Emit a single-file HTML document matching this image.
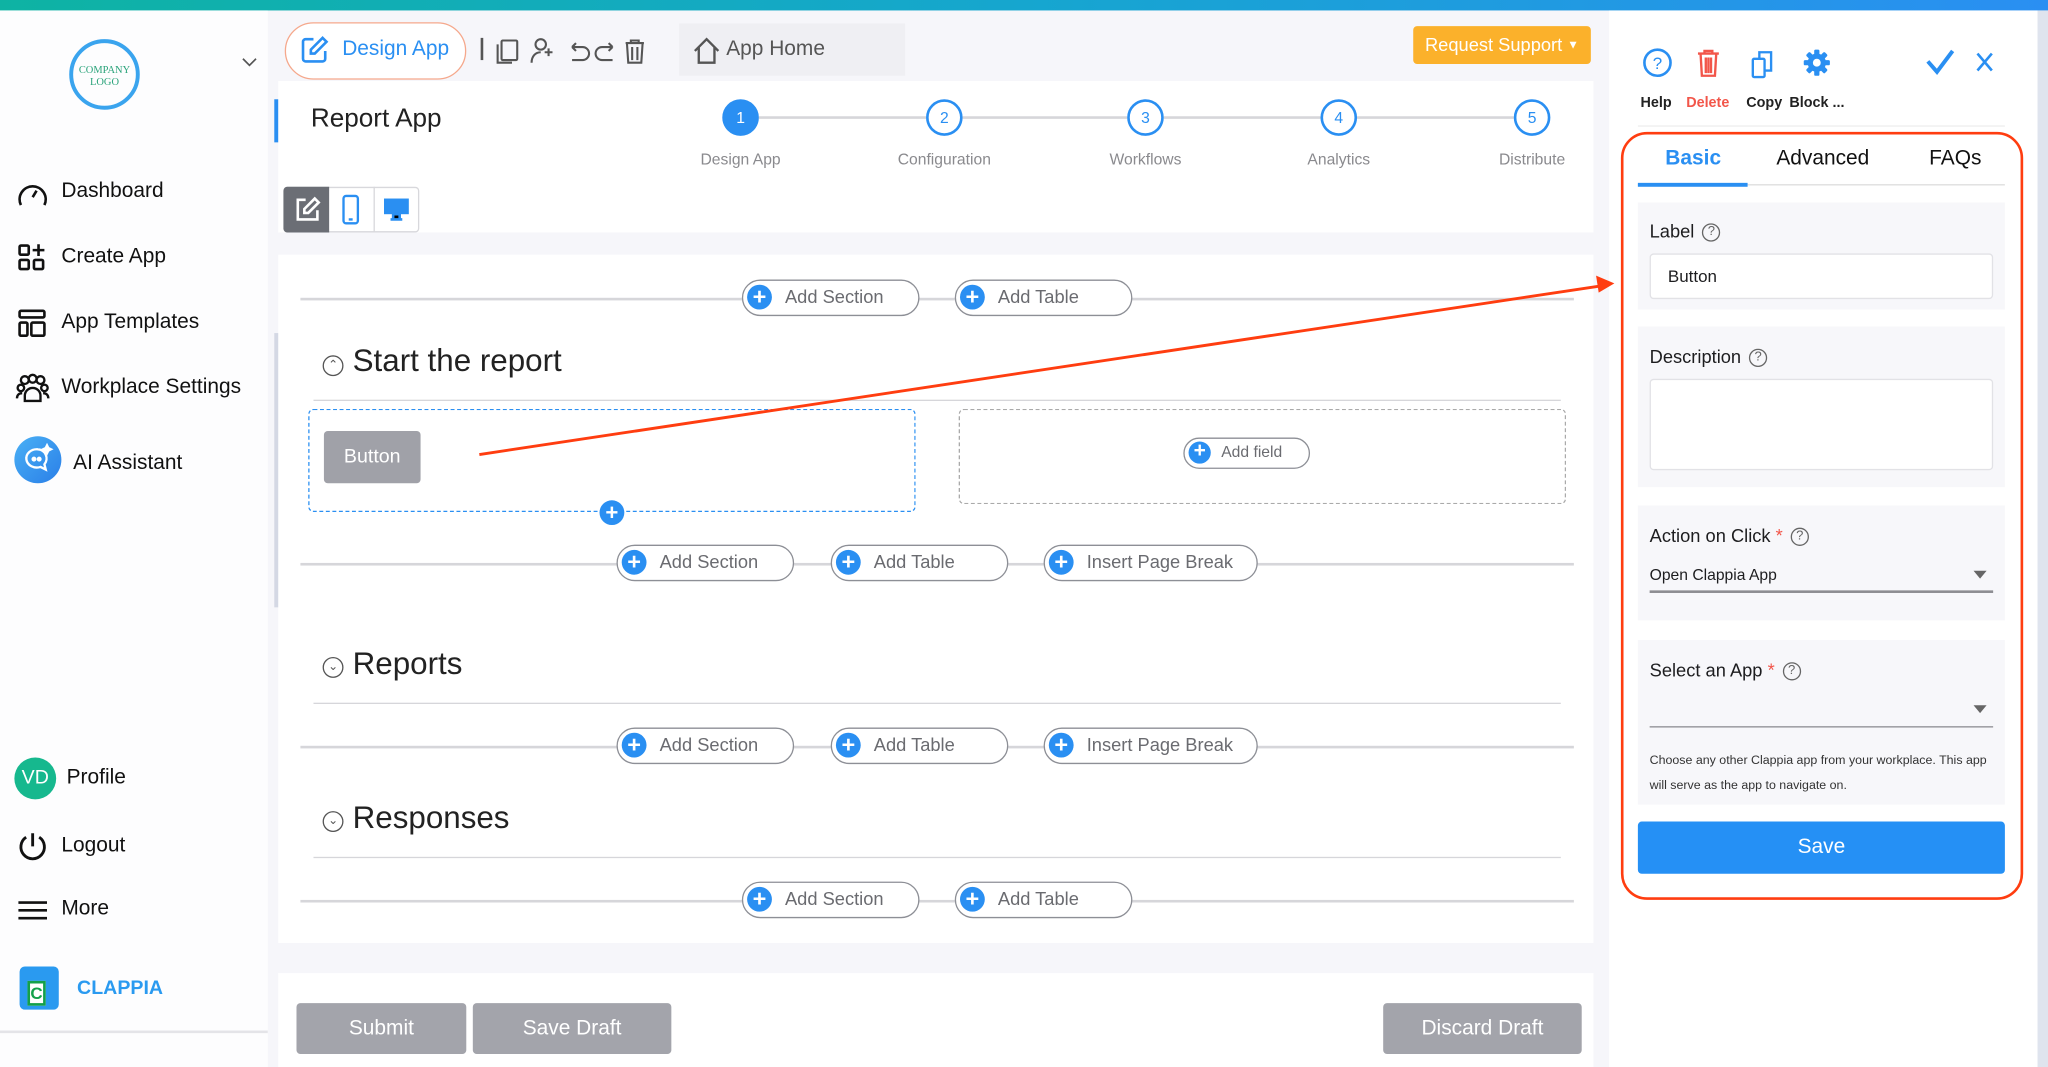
<!DOCTYPE html>
<html><head><meta charset="utf-8"><style>
*{box-sizing:border-box;margin:0;padding:0}
body{width:2048px;height:1067px;overflow:hidden;background:#f6f6fa;font-family:"Liberation Sans",sans-serif;color:#1d1d1f}
#s{position:absolute;left:0;top:0;width:1568px;height:817px;transform:scale(1.30612);transform-origin:0 0;background:#f6f6fa;overflow:hidden}
.a{position:absolute}
.pill{position:absolute;height:28px;border:1.5px solid #8d8f96;border-radius:14px;background:#fff;font-size:14px;color:#6a6b70;line-height:25px;padding-left:32px}
.pill:before{content:"";position:absolute;left:3px;top:3px;width:19px;height:19px;border-radius:50%;background:#2a8ff2}
.pill:after{content:"+";position:absolute;left:3px;top:2px;width:19px;text-align:center;color:#fff;font-weight:bold;font-size:18px;line-height:20px}
.pill.sm:before{top:2px;width:17px;height:17px}
.pill.sm:after{top:1px;width:17px;font-size:16px;line-height:18px}
.hl{position:absolute;height:1.5px;background:#d6d6da}
.nav{position:absolute;left:47px;font-size:16px;color:#111}
.step{position:absolute;width:28px;height:28px;border-radius:50%;border:2px solid #2a8ff2;color:#2a8ff2;font-size:12px;text-align:center;line-height:24px;background:#fff}
.sl{position:absolute;font-size:12px;color:#8a8a8e;width:120px;text-align:center}
.card{position:absolute;left:1254px;width:281px;background:#f7f7fa}
.q{display:inline-block;width:14px;height:14px;border:1.3px solid #666;border-radius:50%;font-size:10px;text-align:center;line-height:12px;color:#666;vertical-align:middle;margin-left:6px}
.fb{position:absolute;background:#a3a4ab;color:#fff;font-size:16px;text-align:center;line-height:39px;border-radius:3px;height:39px;top:768px}
h2{position:absolute;font-weight:normal;font-size:24px;color:#222}
.chev{position:absolute;width:16px;height:16px;border:1.3px solid #555;border-radius:50%;font-size:9px;text-align:center;line-height:13px;color:#555}
</style></head><body><div id="s">
<div class="a" style="left:0;top:0;width:1568px;height:8px;background:linear-gradient(90deg,#0eb3a3,#16a6cf 50%,#2a8ff2)"></div>
<!-- sidebar -->
<div class="a" style="left:0;top:8px;width:205px;height:809px;background:#fdfdfe"></div>
<div class="a" style="left:0;top:789px;width:205px;height:1.5px;background:#e4e4e8"></div>
<div class="a" style="left:53px;top:30px;width:54px;height:54px;border-radius:50%;border:3px solid #3aa4ee;font-family:'Liberation Serif',serif;font-size:8px;color:#2aa37a;text-align:center;line-height:9px;padding-top:16px">COMPANY<br>LOGO</div>
<svg class="a" style="left:185px;top:44px" width="12" height="8" fill="none" stroke="#555" stroke-width="1.3"><path d="M1 1l5 5 5-5"/></svg>
<svg class="a" style="left:12px;top:136px" width="26" height="24" viewBox="0 0 26 24" fill="none" stroke="#111" stroke-width="2"><path d="M4 21A10 10 0 1 1 22 21"/><path d="M13 15l3-5"/></svg>
<div class="nav" style="top:138px">Dashboard</div>
<svg class="a" style="left:13px;top:186px" width="24" height="24" fill="none" stroke="#111" stroke-width="2"><rect x="2" y="2" width="7" height="7" rx="1"/><rect x="2" y="13" width="7" height="7" rx="1"/><rect x="13" y="13" width="7" height="7" rx="1"/><path d="M16.5 1v9M12 5.5h9"/></svg>
<div class="nav" style="top:188px">Create App</div>
<svg class="a" style="left:13px;top:236px" width="24" height="24" fill="none" stroke="#111" stroke-width="2"><rect x="2" y="2" width="19" height="5" rx="1"/><rect x="2" y="11" width="6" height="10" rx="1"/><rect x="11" y="11" width="10" height="10" rx="1"/></svg>
<div class="nav" style="top:238px">App Templates</div>
<svg class="a" style="left:11px;top:286px" width="28" height="24" fill="none" stroke="#111" stroke-width="1.8"><circle cx="8" cy="5" r="3"/><circle cx="14" cy="4" r="3"/><circle cx="20" cy="5" r="3"/><circle cx="5" cy="11" r="2.5"/><circle cx="23" cy="11" r="2.5"/><path d="M8 21v-4a6 6 0 0 1 12 0v4zM2 19c0-3 2-4 4-4M26 19c0-3-2-4-4-4"/></svg>
<div class="nav" style="top:288px">Workplace Settings</div>
<div class="a" style="left:11px;top:334px;width:36px;height:36px;border-radius:50%;background:linear-gradient(135deg,#4ab0f5,#2a7fe8)"></div>
<svg class="a" style="left:16px;top:339px" width="26" height="26" fill="none" stroke="#fff" stroke-width="1.8"><path d="M13 5a8 7 0 1 0 2 13.5l4 2-1-4A7 7 0 0 0 13 5z"/><circle cx="10" cy="12.5" r="1" fill="#fff"/><circle cx="14" cy="12.5" r="1" fill="#fff"/><path d="M20 2l1 2 2 1-2 1-1 2-1-2-2-1 2-1z" fill="#fff"/></svg>
<div class="nav" style="left:56px;top:346px">AI Assistant</div>
<div class="a" style="left:11px;top:580px;width:32px;height:32px;border-radius:50%;background:#16b88e;color:#fff;font-size:15px;text-align:center;line-height:32px">VD</div>
<div class="nav" style="left:51px;top:587px">Profile</div>
<svg class="a" style="left:13px;top:636px" width="24" height="24" fill="none" stroke="#111" stroke-width="2.2"><path d="M12 2v10M7 5a9 9 0 1 0 10 0"/></svg>
<div class="nav" style="top:639px">Logout</div>
<svg class="a" style="left:14px;top:688px" width="22" height="18" stroke="#111" stroke-width="2"><path d="M0 3h22M0 9h22M0 15h22"/></svg>
<div class="nav" style="top:687px">More</div>
<div class="a" style="left:15px;top:740px;width:30px;height:33px;border-radius:4px;background:#2a9af0"></div>
<div class="a" style="left:21px;top:751px;width:14px;height:19px;background:#fff;border:2px solid #14a04a;color:#14a04a;font-weight:bold;font-size:13px;line-height:15px;text-align:center">C</div>
<div class="a" style="left:59px;top:748px;font-size:15px;font-weight:bold;color:#2a9af0">CLAPPIA</div>
<!-- toolbar -->
<div class="a" style="left:218px;top:17px;width:139px;height:44px;border:1.5px solid #f5a88c;border-radius:22px;background:#fff"></div>
<svg class="a" style="left:230px;top:27px" width="22" height="22" fill="none" stroke="#2a8ff2" stroke-width="2"><path d="M10 3H4a2 2 0 0 0-2 2v13a2 2 0 0 0 2 2h13a2 2 0 0 0 2-2v-6"/><path d="M17 2l3 3-9 9H8v-3z"/></svg>
<div class="a" style="left:262px;top:29px;font-size:16px;color:#2a8ff2">Design App</div>
<div class="a" style="left:368px;top:29px;width:2px;height:17px;background:#555"></div>
<svg class="a" style="left:380px;top:28px" width="120" height="22" fill="none" stroke="#555" stroke-width="1.6"><rect x="4" y="3" width="12" height="15" rx="1"/><path d="M1 6v14h11"/><circle cx="34" cy="6" r="4"/><path d="M27 20c0-5 3-8 7-8M40 9v6M37 12h6"/><path d="M58 8h8a5 5 0 0 1 0 10h-8M58 8l3-3M58 8l3 3"/><path d="M89 8h-8a5 5 0 0 0 0 10h8M89 8l-3-3M89 8l-3 3"/><path d="M99 5h14M103 5V3h6v2M100 5l1 15h10l1-15M104 8v10M108 8v10"/></svg>
<div class="a" style="left:520px;top:18px;width:173px;height:40px;background:#efeff3"></div>
<svg class="a" style="left:530px;top:28px" width="22" height="22" fill="none" stroke="#555" stroke-width="1.8"><path d="M2 11L11 2l9 9M5 8v12h12V8"/></svg>
<div class="a" style="left:556px;top:29px;font-size:16px;color:#555">App Home</div>
<div class="a" style="left:1082px;top:20px;width:136px;height:29px;background:#fbb12b;border-radius:3px;color:#fff;font-size:14px;line-height:29px;padding-left:9px">Request Support <span style="font-size:9px;vertical-align:2px">&#9660;</span></div>
<!-- header card -->
<div class="a" style="left:213px;top:62px;width:1007px;height:116px;background:#fff"></div>
<div class="a" style="left:210px;top:76px;width:3px;height:33px;background:#2a8ff2"></div>
<div class="a" style="left:238px;top:80px;font-size:20px;color:#222">Report App</div>
<div class="hl" style="left:581px;top:89px;width:128px"></div>
<div class="hl" style="left:737px;top:89px;width:126px"></div>
<div class="hl" style="left:891px;top:89px;width:120px"></div>
<div class="hl" style="left:1039px;top:89px;width:120px"></div>
<div class="step" style="left:553px;top:76px;background:#2a8ff2;color:#fff">1</div>
<div class="step" style="left:709px;top:76px">2</div>
<div class="step" style="left:863px;top:76px">3</div>
<div class="step" style="left:1011px;top:76px">4</div>
<div class="step" style="left:1159px;top:76px">5</div>
<div class="sl" style="left:507px;top:115px">Design App</div>
<div class="sl" style="left:663px;top:115px">Configuration</div>
<div class="sl" style="left:817px;top:115px">Workflows</div>
<div class="sl" style="left:965px;top:115px">Analytics</div>
<div class="sl" style="left:1113px;top:115px">Distribute</div>
<div class="a" style="left:217px;top:143px;width:104px;height:35px;border:1px solid #d8d8dc;border-radius:3px;background:#fff"></div>
<div class="a" style="left:217px;top:143px;width:35px;height:35px;background:#6b6e75;border-radius:3px 0 0 3px"></div>
<div class="a" style="left:286px;top:143px;width:1px;height:35px;background:#d8d8dc"></div>
<svg class="a" style="left:224px;top:150px" width="22" height="22" fill="none" stroke="#fff" stroke-width="2"><path d="M10 3H4v15h15v-7"/><path d="M17 2l3 3-8 8H9v-3z"/></svg>
<svg class="a" style="left:260px;top:148px" width="18" height="26" fill="none" stroke="#2a8ff2" stroke-width="1.8"><rect x="3" y="2" width="11" height="21" rx="2"/><path d="M7 20h3"/></svg>
<svg class="a" style="left:293px;top:151px" width="22" height="20"><rect x="1" y="1" width="19" height="12" fill="#2a8ff2"/><path d="M8 13h5v4H8zM6 17h9" stroke="#2a8ff2" stroke-width="2"/></svg>
<!-- canvas -->
<div class="a" style="left:213px;top:195px;width:1007px;height:527px;background:#fff"></div>
<div class="a" style="left:210px;top:255px;width:3px;height:210px;background:#d4d8e4"></div>
<div class="hl" style="left:230px;top:228px;width:975px"></div>
<div class="pill" style="left:568px;top:214px;width:136px">Add Section</div>
<div class="pill" style="left:731px;top:214px;width:136px">Add Table</div>
<div class="chev" style="left:247px;top:272px">&#8963;</div>
<h2 style="left:270px;top:263px">Start the report</h2>
<div class="hl" style="left:240px;top:306px;width:955px;height:1px"></div>
<div class="a" style="left:236px;top:313px;width:465px;height:79px;border:1.5px dashed #2a8ff2;border-radius:4px"></div>
<div class="a" style="left:248px;top:330px;width:74px;height:40px;background:#a0a1a8;border-radius:3px;color:#fff;font-size:15px;text-align:center;line-height:40px">Button</div>
<div class="a" style="left:459px;top:383px;width:19px;height:19px;border-radius:50%;background:#2a8ff2;color:#fff;font-weight:bold;text-align:center;line-height:19px;font-size:17px">+</div>
<div class="a" style="left:734px;top:313px;width:465px;height:73px;border:1.5px dashed #aaa;border-radius:4px"></div>
<div class="pill sm" style="left:906px;top:335px;width:97px;height:24px;font-size:12px;line-height:21px;padding-left:28px">Add field</div>
<div class="hl" style="left:230px;top:431px;width:975px"></div>
<div class="pill" style="left:472px;top:417px;width:136px">Add Section</div>
<div class="pill" style="left:636px;top:417px;width:136px">Add Table</div>
<div class="pill" style="left:799px;top:417px;width:164px">Insert Page Break</div>
<div class="chev" style="left:247px;top:503px">&#8964;</div>
<h2 style="left:270px;top:495px">Reports</h2>
<div class="hl" style="left:240px;top:538px;width:955px;height:1px"></div>
<div class="hl" style="left:230px;top:571px;width:975px"></div>
<div class="pill" style="left:472px;top:557px;width:136px">Add Section</div>
<div class="pill" style="left:636px;top:557px;width:136px">Add Table</div>
<div class="pill" style="left:799px;top:557px;width:164px">Insert Page Break</div>
<div class="chev" style="left:247px;top:621px">&#8964;</div>
<h2 style="left:270px;top:613px">Responses</h2>
<div class="hl" style="left:240px;top:656px;width:955px;height:1px"></div>
<div class="hl" style="left:230px;top:689px;width:975px"></div>
<div class="pill" style="left:568px;top:675px;width:136px">Add Section</div>
<div class="pill" style="left:731px;top:675px;width:136px">Add Table</div>
<!-- footer -->
<div class="a" style="left:213px;top:745px;width:1007px;height:72px;background:#fff"></div>
<div class="fb" style="left:227px;width:130px">Submit</div>
<div class="fb" style="left:362px;width:152px">Save Draft</div>
<div class="fb" style="left:1059px;width:152px">Discard Draft</div>
<!-- right panel -->
<div class="a" style="left:1232px;top:8px;width:328px;height:809px;background:#fff"></div>
<div class="a" style="left:1560px;top:8px;width:8px;height:809px;background:#dfe4ee"></div>
<svg class="a" style="left:1256px;top:36px" width="160" height="26" fill="none"><circle cx="13" cy="12" r="10" stroke="#2a8ff2" stroke-width="2"/><text x="13" y="17" font-size="13" fill="#2a8ff2" text-anchor="middle" font-family="Liberation Sans">?</text><path d="M44 5h16M49 5V3h6v2M46 5l1 17h10l1-17M50 8v12M52 8v12M54 8v12" stroke="#f2564a" stroke-width="1.8"/><rect x="86" y="9" width="9" height="14" rx="1" stroke="#2a8ff2" stroke-width="1.8"/><path d="M91 9V4h9v14h-5" stroke="#2a8ff2" stroke-width="1.8"/><g fill="#2a8ff2"><circle cx="135" cy="12" r="7"/><rect x="133" y="2" width="4" height="20" rx="1"/><rect x="133" y="2" width="4" height="20" rx="1" transform="rotate(45 135 12)"/><rect x="133" y="2" width="4" height="20" rx="1" transform="rotate(90 135 12)"/><rect x="133" y="2" width="4" height="20" rx="1" transform="rotate(135 135 12)"/></g><circle cx="135" cy="12" r="3" fill="#fff"/></svg>
<div class="a" style="left:1256px;top:73px;font-size:11px;font-weight:bold;color:#222">Help</div>
<div class="a" style="left:1291px;top:73px;font-size:11px;font-weight:bold;color:#f2564a">Delete</div>
<div class="a" style="left:1337px;top:73px;font-size:11px;font-weight:bold;color:#222">Copy</div>
<div class="a" style="left:1370px;top:73px;font-size:11px;font-weight:bold;color:#222">Block ...</div>
<svg class="a" style="left:1474px;top:36px" width="60" height="22" fill="none" stroke="#2a8ff2" stroke-width="3"><path d="M2 11l7 8L21 3"/><path d="M40 5l11 13M51 5L40 18" stroke-width="2"/></svg>
<div class="a" style="left:1254px;top:96px;width:281px;height:1px;background:#eee"></div>
<div class="a" style="left:1241px;top:101px;width:308px;height:588px;border:2px solid #ff3d10;border-radius:20px"></div>
<div class="a" style="left:1275px;top:113px;font-size:16px;color:#2a8ff2;font-weight:bold">Basic</div>
<div class="a" style="left:1360px;top:113px;font-size:16px;color:#111">Advanced</div>
<div class="a" style="left:1477px;top:113px;font-size:16px;color:#111">FAQs</div>
<div class="a" style="left:1254px;top:141px;width:281px;height:1px;background:#ddd"></div>
<div class="a" style="left:1254px;top:140px;width:84px;height:3px;background:#2a8ff2"></div>
<div class="card" style="top:155px;height:82px"></div>
<div class="a" style="left:1263px;top:169px;font-size:14px">Label<span class="q">?</span></div>
<div class="a" style="left:1263px;top:194px;width:263px;height:35px;background:#fff;border:1px solid #e2e2e6;border-radius:3px;font-size:13px;line-height:33px;padding-left:13px">Button</div>
<div class="card" style="top:250px;height:123px"></div>
<div class="a" style="left:1263px;top:265px;font-size:14px">Description<span class="q">?</span></div>
<div class="a" style="left:1263px;top:290px;width:263px;height:70px;background:#fff;border:1px solid #e2e2e6;border-radius:3px"></div>
<div class="card" style="top:387px;height:88px"></div>
<div class="a" style="left:1263px;top:402px;font-size:14px">Action on Click <span style="color:#f2564a">*</span><span class="q">?</span></div>
<div class="a" style="left:1263px;top:433px;font-size:12px">Open Clappia App</div>
<div class="a" style="left:1511px;top:437px;border:5px solid transparent;border-top:6px solid #666"></div>
<div class="a" style="left:1263px;top:452px;width:263px;height:1.5px;background:#8d8d92"></div>
<div class="card" style="top:490px;height:126px"></div>
<div class="a" style="left:1263px;top:505px;font-size:14px">Select an App <span style="color:#f2564a">*</span><span class="q">?</span></div>
<div class="a" style="left:1511px;top:540px;border:5px solid transparent;border-top:6px solid #666"></div>
<div class="a" style="left:1263px;top:556px;width:263px;height:1px;background:#8d8d92"></div>
<div class="a" style="left:1263px;top:573px;font-size:9.5px;line-height:19px;color:#333;width:262px">Choose any other Clappia app from your workplace. This app will serve as the app to navigate on.</div>
<div class="a" style="left:1254px;top:629px;width:281px;height:40px;background:#2590f5;border-radius:3px;color:#fff;font-size:16px;text-align:center;line-height:40px">Save</div>
<!-- arrow -->
<svg class="a" style="left:0;top:0" width="1568" height="817"><path d="M367 348L1225 219" stroke="#ff3d10" stroke-width="2.2"/><path d="M1236 217l-14-6 2 13z" fill="#ff3d10"/></svg>
</div></body></html>
